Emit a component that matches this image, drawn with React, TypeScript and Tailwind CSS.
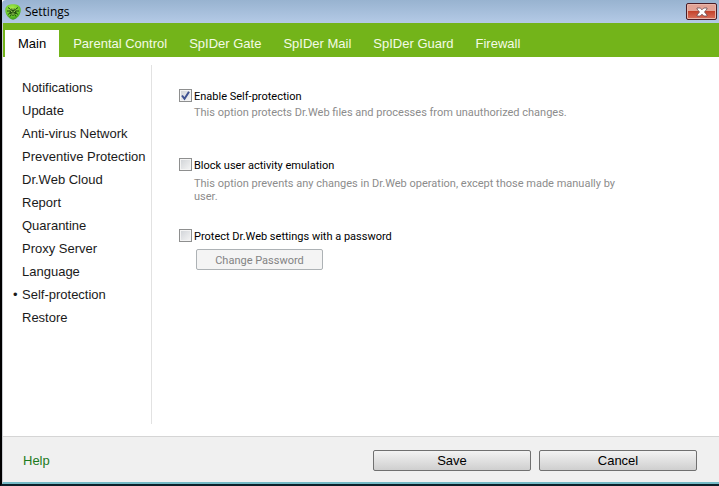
import React, { useState } from "react";

const tabs = ["Main", "Parental Control", "SpIDer Gate", "SpIDer Mail", "SpIDer Guard", "Firewall"];

const sections = [
  "Notifications",
  "Update",
  "Anti-virus Network",
  "Preventive Protection",
  "Dr.Web Cloud",
  "Report",
  "Quarantine",
  "Proxy Server",
  "Language",
  "Self-protection",
  "Restore",
];

const SpiderIcon = () => (
  <svg viewBox="0 0 16 16" className="h-4 w-4 shrink-0" aria-hidden="true">
    <defs>
      <radialGradient id="shield" cx="0.45" cy="0.3" r="0.75">
        <stop offset="0" stopColor="#b4f04f" />
        <stop offset="0.6" stopColor="#69c82a" />
        <stop offset="1" stopColor="#358f18" />
      </radialGradient>
    </defs>
    <path d="M8 .3C12 .3 15 1.800 15.600 4.500c.8 5-2.600 10-7.600 11.200C3 14.500-.4 9.500.4 4.500 1 1.800 4 .3 8 .3Z" fill="url(#shield)" />
    <path
      d="M5 5 3 3.500M11 5 13 3.500M4.500 7H2M11.500 7H14M5 9 3 10.500M11 9 13 10.500M6 11 5 12.500M10 11 11 12.500"
      stroke="#1f4a10"
      strokeWidth="1"
      fill="none"
    />
    <path d="M6 4.500h4l1.500 2v3L8 12 4.500 9.500v-3Z" fill="#24520f" />
    <path d="M5.500 6.500 7.500 8M10.500 6.500 8.500 8M6.500 10h3M6.500 5h3" stroke="#b8e86a" strokeWidth="1" />
  </svg>
);

const CloseIcon = () => (
  <svg viewBox="0 0 12 10" className="h-2.5 w-3" aria-hidden="true">
    <path
      d="M1 1h3.200L6 2.800 7.800 1H11v1L8.500 5 11 8v1H7.800L6 7.200 4.200 9H1V8l2.500-3L1 2Z"
      fill="#fff"
      stroke="#6b4a50"
      strokeWidth="0.8"
    />
  </svg>
);

type OptionProps = {
  label: string;
  checked: boolean;
  onChange: (value: boolean) => void;
};

const Option = ({ label, checked, onChange }: OptionProps) => (
  <label className="flex items-start gap-0.5 text-[11px] leading-4 text-black">
    <span className="relative h-[13px] w-[13px] shrink-0">
      <input
        type="checkbox"
        checked={checked}
        onChange={(e) => onChange(e.target.checked)}
        className="block h-[13px] w-[13px] appearance-none border border-[#8e8f8f] bg-linear-to-br from-[#cfd2d6] to-[#f6f6f6] shadow-[inset_0_0_0_1px_#f4f4f4]"
      />
      {checked && (
        <svg viewBox="0 0 13 13" className="pointer-events-none absolute inset-0" aria-hidden="true">
          <path d="M3 6.500 5.500 9.800 10 2.800" fill="none" stroke="#3f5291" strokeWidth="2" />
        </svg>
      )}
    </span>
    {label}
  </label>
);

export default function App() {
  const [selfProtection, setSelfProtection] = useState(true);
  const [blockEmulation, setBlockEmulation] = useState(false);
  const [usePassword, setUsePassword] = useState(false);

  return (
    <div className="flex min-h-screen flex-col border-b-2 border-l-2 border-b-[#0b1f28] border-l-black bg-white font-['Liberation_Sans',Arial,sans-serif] text-[13px] text-[#1a1a1a]">
      {/* Title bar */}
      <div className="flex h-[23px] items-center justify-between rounded-tl bg-linear-to-b from-[#98b3d0] to-[#b4cae6] pr-0.5 pl-[3px]">
        <div className="flex items-center gap-1">
          <SpiderIcon />
          <h1 className="font-['Open_Sans','Noto_Sans',sans-serif] text-xs text-black">Settings</h1>
        </div>
        <button
          type="button"
          aria-label="Close"
          className="flex h-[17px] w-[31px] items-center justify-center rounded-xs border border-[#4a1d26] bg-linear-to-b from-[#e2a396] from-45% via-[#c4432c] via-50% to-[#d9705c] shadow-[inset_0_0_0_1px_#e8b5aa]"
        >
          <CloseIcon />
        </button>
      </div>

      <div className="flex flex-1 flex-col border-b-2 border-l border-b-[#74bac6] border-l-[#c9ccd0]">
        {/* Tabs */}
        <nav className="flex h-[34px] items-end bg-[#73b41a] pl-0.5">
          {tabs.map((tab, i) => (
            <button
              key={tab}
              type="button"
              className={
                i === 0
                  ? "mr-[3px] h-[27px] bg-white px-[13px] text-black"
                  : "h-[27px] px-[11px] whitespace-nowrap text-[#f4fbe6]"
              }
            >
              {tab}
            </button>
          ))}
        </nav>

        <div className="flex flex-1">
          {/* Sections */}
          <aside className="mt-2 mb-3 w-[149px] shrink-0 border-r border-[#e2e2e2] pt-[11px] pl-2.5">
            <ul>
              {sections.map((section) => (
                <li key={section} className="flex h-[23px] items-center whitespace-nowrap">
                  <span className="w-[9px]">{section === "Self-protection" && "•"}</span>
                  <a href="#">{section}</a>
                </li>
              ))}
            </ul>
          </aside>

          {/* Self-protection options */}
          <main className="flex-1 pt-8 pr-20 pl-[27px] font-['Roboto',Tahoma,sans-serif] text-[11px] leading-[13px] text-[#8c8c8c]">
            <Option label="Enable Self-protection" checked={selfProtection} onChange={setSelfProtection} />
            <p className="mt-px pl-[15px]">
              This option protects Dr.Web files and processes from unauthorized changes.
            </p>

            <div className="mt-[39px]">
              <Option label="Block user activity emulation" checked={blockEmulation} onChange={setBlockEmulation} />
              <p className="mt-[3px] pl-[15px]">
                This option prevents any changes in Dr.Web operation, except those made manually by user.
              </p>
            </div>

            <div className="mt-[26px]">
              <Option label="Protect Dr.Web settings with a password" checked={usePassword} onChange={setUsePassword} />
              <button
                type="button"
                disabled={!usePassword}
                className="mt-1 ml-[17px] h-[21px] w-[127px] rounded-xs border border-[#adb2b5] bg-[#f4f4f4] pt-px text-[#838383]"
              >
                Change Password
              </button>
            </div>
          </main>
        </div>

        {/* Footer */}
        <footer className="flex items-center justify-between border-t border-[#d5d5d5] bg-[#f0f0f0] pt-[13px] pr-[22px] pb-[11px] pl-5">
          <a href="#" className="text-[#1c7a1c]">
            Help
          </a>
          <div className="flex gap-2">
            <button type="button" className="h-[21px] w-[158px] rounded-xs border border-[#707070] bg-linear-to-b from-[#f3f3f3] to-[#cfcfcf] text-black">
              Save
            </button>
            <button type="button" className="h-[21px] w-[158px] rounded-xs border border-[#707070] bg-linear-to-b from-[#f3f3f3] to-[#cfcfcf] text-black">
              Cancel
            </button>
          </div>
        </footer>
      </div>
    </div>
  );
}
